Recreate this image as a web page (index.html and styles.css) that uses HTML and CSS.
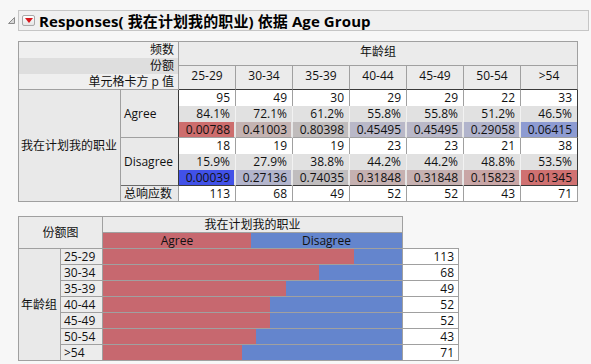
FILE: index.html
```html
<!DOCTYPE html>
<html lang="zh">
<head>
<meta charset="utf-8">
<title>Responses</title>
<link rel="stylesheet" href="styles.css">
</head>
<body>
<div class="titlerow">
  <svg class="disc" width="7" height="7" viewBox="0 0 7 7"><polygon points="6.5,0.5 6.5,6.5 0.5,6.5" fill="#d8d8d8" stroke="#8a8a8a" stroke-width="1"/></svg>
  <div class="titlebox">
    <span class="menubtn"><svg width="8" height="5" viewBox="0 0 8 5"><polygon points="0,0 8,0 4,5" fill="#d8161b"/></svg></span>
    <span class="title">Responses( 我在计划我的职业) 依据 Age Group</span>
  </div>
</div>

<div class="xtab">
  <div class="hl">
    <div class="hl-r lt">频数</div>
    <div class="hl-r dk">份额</div>
    <div class="hl-r lt">单元格卡方 p 值</div>
  </div>
  <div class="grp">年龄组</div>
  <div class="age">25-29</div>
  <div class="age">30-34</div>
  <div class="age">35-39</div>
  <div class="age">40-44</div>
  <div class="age">45-49</div>
  <div class="age">50-54</div>
  <div class="age">&gt;54</div>

  <div class="rl">我在计划我的职业</div>
  <div class="cat agree">Agree</div>
  <div class="cat disagree">Disagree</div>
  <div class="cat total">总响应数</div>

  <div class="d n">95</div><div class="d n">49</div><div class="d n">30</div><div class="d n">29</div><div class="d n">29</div><div class="d n">22</div><div class="d n last">33</div>
  <div class="d p">84.1%</div><div class="d p">72.1%</div><div class="d p">61.2%</div><div class="d p">55.8%</div><div class="d p">55.8%</div><div class="d p">51.2%</div><div class="d p last">46.5%</div>
  <div class="d c gb" style="background:#cd6d6d">0.00788</div><div class="d c gb" style="background:#c4b3b2">0.41003</div><div class="d c gb" style="background:#c0bcbc">0.80398</div><div class="d c gb" style="background:#b9b8c8">0.45495</div><div class="d c gb" style="background:#b9b8c8">0.45495</div><div class="d c gb" style="background:#b1b4cc">0.29058</div><div class="d c gb last" style="background:#8d9bd2">0.06415</div>

  <div class="d n">18</div><div class="d n">19</div><div class="d n">19</div><div class="d n">23</div><div class="d n">23</div><div class="d n">21</div><div class="d n last">38</div>
  <div class="d p">15.9%</div><div class="d p">27.9%</div><div class="d p">38.8%</div><div class="d p">44.2%</div><div class="d p">44.2%</div><div class="d p">48.8%</div><div class="d p last">53.5%</div>
  <div class="d c db" style="background:#4151e8">0.00039</div><div class="d c db" style="background:#b3b5cc">0.27136</div><div class="d c db" style="background:#c0bdbe">0.74035</div><div class="d c db" style="background:#c6b1b1">0.31848</div><div class="d c db" style="background:#c6b1b1">0.31848</div><div class="d c db" style="background:#c9a6a6">0.15823</div><div class="d c db last" style="background:#d07171">0.01345</div>

  <div class="t">113</div><div class="t">68</div><div class="t">49</div><div class="t">52</div><div class="t">52</div><div class="t">43</div><div class="t">71</div>
</div>

<div class="pc">
  <div class="pc-h">份额图</div>
  <div class="pc-t">我在计划我的职业</div>
  <div class="pc-leg"><span class="leg-a">Agree</span><span class="leg-d">Disagree</span></div>
  <div class="pc-blank"></div>
  <div class="pc-g">年龄组</div>

  <div class="pc-age">25-29</div><div class="pc-bar"><span class="red" style="width:84.1%"></span></div><div class="pc-n">113</div>
  <div class="pc-age">30-34</div><div class="pc-bar"><span class="red" style="width:72.1%"></span></div><div class="pc-n">68</div>
  <div class="pc-age">35-39</div><div class="pc-bar"><span class="red" style="width:61.2%"></span></div><div class="pc-n">49</div>
  <div class="pc-age">40-44</div><div class="pc-bar"><span class="red" style="width:55.8%"></span></div><div class="pc-n">52</div>
  <div class="pc-age">45-49</div><div class="pc-bar"><span class="red" style="width:55.8%"></span></div><div class="pc-n">52</div>
  <div class="pc-age">50-54</div><div class="pc-bar"><span class="red" style="width:51.2%"></span></div><div class="pc-n">43</div>
  <div class="pc-age">&gt;54</div><div class="pc-bar"><span class="red" style="width:46.5%"></span></div><div class="pc-n">71</div>
</div>
</body>
</html>
```

FILE: styles.css
```css
* { box-sizing: border-box; }
html, body { margin: 0; padding: 0; }
body {
  background: #f7f7f7;
  font-family: "Open Sans", "Noto Sans CJK SC", sans-serif;
  font-size: 12px;
  line-height: 16px;
  color: #111;
  width: 591px;
  height: 364px;
  overflow: hidden;
}

/* title */
.titlerow {
  display: flex;
  align-items: center;
  padding: 10px 0 0 8px;
}
.disc { display: block; margin-right: 3px; }
.titlebox {
  width: 571px;
  height: 21px;
  border: 1px solid #c6c6c6;
  background: #f0f0f0;
  display: flex;
  align-items: center;
  padding-left: 3px;
}
.menubtn {
  width: 13px;
  height: 11px;
  border: 1px solid #a9a9a9;
  border-radius: 2px;
  background: linear-gradient(#ffffff, #e4e4e4);
  display: flex;
  align-items: center;
  justify-content: center;
  margin-right: 4px;
}
.menubtn svg { display: block; }
.title {
  font-size: 15px;
  font-weight: 700;
  line-height: 18px;
  color: #000;
  white-space: nowrap;
  letter-spacing: 0.1px;
}

/* crosstab */
.xtab {
  margin: 10px 0 0 18px;
  display: grid;
  grid-template-columns: 103px 58px repeat(7, 57px);
  grid-template-rows: 25px 24px repeat(6, 16px) 16px;
  width: 560px;
}
.hl {
  grid-column: 1 / 3;
  grid-row: 1 / 3;
  border: 1px solid #a0a0a0;
  display: flex;
  flex-direction: column;
}
.hl-r { height: 16px; text-align: right; padding-right: 4px; white-space: nowrap; }
.hl-r:last-child { height: 15px; }
.lt { background: #efefef; }
.dk { background: #dedede; }
.grp {
  grid-column: 3 / 10;
  grid-row: 1;
  background: #ebebeb;
  border-top: 1px solid #a0a0a0;
  border-right: 1px solid #a0a0a0;
  border-bottom: 1px solid #a0a0a0;
  text-align: center;
  padding-top: 2px;
}
.age {
  background: #ebebeb;
  border-right: 1px solid #a0a0a0;
  border-bottom: 1px solid #3a3a3a;
  text-align: center;
  padding-top: 2px;
}
.rl {
  grid-column: 1;
  grid-row: 3 / 10;
  background: #e9e9e9;
  border-left: 1px solid #a0a0a0;
  border-right: 1px solid #a0a0a0;
  border-bottom: 1px solid #a0a0a0;
  display: flex;
  align-items: center;
  padding-left: 2px;
}
.cat {
  grid-column: 2;
  background: #e9e9e9;
  display: flex;
  align-items: center;
  padding-left: 3px;
  border-bottom: 1px solid #a0a0a0;
  border-right: 1px solid #3a3a3a;
}
.agree { grid-row: 3 / 6; }
.disagree { grid-row: 6 / 9; border-bottom-color: #6a6a6a; }
.total { grid-row: 9; border-right-color: #a0a0a0; }
.d {
  text-align: right;
  padding-right: 5px;
  border-right: 1px solid #a0a0a0;
}
.n { background: #ffffff; }
.p { background: #e1e1e1; border-right-color: #f2f2f2; }
.c { border-right: 2px solid #e6e6e6; padding-right: 4px; }
.gb { border-bottom: 1px solid #a0a0a0; }
.db { border-bottom: 1px solid #3a3a3a; }
.d.last { border-right: 1px solid #3a3a3a; padding-right: 5px; }
.t {
  background: #ffffff;
  text-align: right;
  padding-right: 5px;
  border-right: 1px solid #a0a0a0;
  border-bottom: 1px solid #a0a0a0;
}

/* proportion chart */
.pc {
  margin: 14px 0 0 18px;
  display: grid;
  grid-template-columns: 43px 42px 300px 56px;
  grid-template-rows: 17px 16px repeat(7, 16px);
  width: 441px;
}
.pc-h {
  grid-column: 1 / 3;
  grid-row: 1 / 3;
  background: #ebebeb;
  border: 1px solid #a0a0a0;
  display: flex;
  align-items: center;
  justify-content: center;
}
.pc-t {
  grid-column: 3;
  grid-row: 1;
  background: #ebebeb;
  border-top: 1px solid #a0a0a0;
  border-right: 1px solid #a0a0a0;
  border-bottom: 1px solid #a0a0a0;
  text-align: center;
}
.pc-leg {
  grid-column: 3;
  grid-row: 2;
  display: flex;
  border-right: 1px solid #a0a0a0;
  border-bottom: 1px solid #a0a0a0;
}
.leg-a { width: 148px; background: #c7686f; text-align: center; line-height: 15px; }
.leg-d { flex: 1; background: #6485cd; text-align: center; line-height: 15px; }
.pc-blank {
  grid-column: 4;
  grid-row: 2;
  border-bottom: 1px solid #a0a0a0;
}
.pc-g {
  grid-column: 1;
  grid-row: 3 / 10;
  background: #e9e9e9;
  border-left: 1px solid #a0a0a0;
  border-right: 1px solid #a0a0a0;
  border-bottom: 1px solid #a0a0a0;
  display: flex;
  align-items: center;
  padding-left: 2px;
}
.pc-age {
  grid-column: 2;
  background: #ececec;
  border-right: 1px solid #a0a0a0;
  border-bottom: 1px solid #a0a0a0;
  padding-left: 3px;
  line-height: 15px;
}
.pc-bar {
  grid-column: 3;
  display: flex;
  background: #6485cd;
  border-right: 1px solid #a0a0a0;
  border-bottom: 1px solid #a0a0a0;
}
.red { display: block; background: #c7686f; height: 100%; }
.pc-n {
  grid-column: 4;
  background: #ffffff;
  text-align: right;
  padding-right: 4px;
  border-right: 1px solid #a0a0a0;
  border-bottom: 1px solid #a0a0a0;
  line-height: 15px;
}
```
